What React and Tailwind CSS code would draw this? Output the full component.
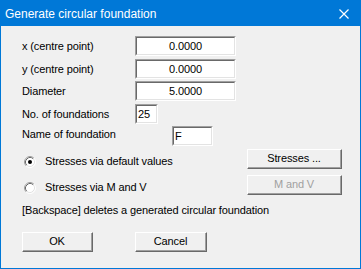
import React from "react";

const font = { fontFamily: '"Liberation Sans", Arial, sans-serif' };

function Sunken({ w, children, align = "center" }) {
  return (
    <div
      className={`h-[20px] border-t border-l border-[#a0a0a0] border-b-white border-r-white border-b border-r ${w}`}
    >
      <div
        className={`h-full w-full border-t border-l border-t-[#696969] border-l-[#696969] border-b border-r border-b-[#e3e3e3] border-r-[#e3e3e3] bg-white flex items-center text-[11px] text-black leading-none ${
          align === "center" ? "justify-center" : "justify-start pl-[1px]"
        }`}
      >
        {children}
      </div>
    </div>
  );
}

function Button({ w, children, disabled }) {
  return (
    <div
      className={`h-[20px] border-t border-l border-t-white border-l-white border-b border-r border-b-[#696969] border-r-[#696969] ${w}`}
    >
      <div
        className={`h-full w-full border-b border-r border-b-[#a0a0a0] border-r-[#a0a0a0] bg-[#f0f0f0] flex items-center justify-center text-[11px] leading-none ${
          disabled ? "text-[#a0a0a0]" : "text-black"
        }`}
      >
        {children}
      </div>
    </div>
  );
}

function Radio({ checked }) {
  return (
    <svg width="12" height="12" viewBox="0 0 12 12" className="shrink-0">
      <circle cx="6" cy="6" r="5" fill="#ffffff" />
      <path d="M2.11 9.89 A5.5 5.5 0 0 1 9.89 2.11" fill="none" stroke="#a0a0a0" strokeWidth="1" />
      <path d="M9.89 2.11 A5.5 5.5 0 0 1 2.11 9.89" fill="none" stroke="#ffffff" strokeWidth="1" />
      <path d="M2.82 9.18 A4.5 4.5 0 0 1 9.18 2.82" fill="none" stroke="#696969" strokeWidth="1" />
      <path d="M9.18 2.82 A4.5 4.5 0 0 1 2.82 9.18" fill="none" stroke="#e3e3e3" strokeWidth="1" />
      {checked && <circle cx="6" cy="6" r="2" fill="#000000" />}
    </svg>
  );
}

export default function App() {
  return (
    <div
      className="w-[361px] h-[269px] border border-[#0078d7] flex flex-col bg-[#f0f0f0]"
      style={font}
    >
      <div className="h-[25px] bg-[#0078d7] flex items-center justify-between pl-[4px] pr-[11px] shrink-0">
        <span className="text-white text-[12px] leading-none">
          Generate circular foundation
        </span>
        <svg width="10" height="10" viewBox="0 0 10 10">
          <path d="M0.5 0.5 L9.5 9.5 M9.5 0.5 L0.5 9.5" stroke="#ffffff" strokeWidth="1.2" />
        </svg>
      </div>

      <div className="flex-1 flex flex-col pl-[21px] pr-[18px] text-[11px] tracking-[-0.12px] text-black">
        <div className="mt-[10px] flex items-center h-[20px]">
          <span className="w-[113px]">x (centre point)</span>
          <Sunken w="w-[101px]">0.0000</Sunken>
        </div>
        <div className="mt-[3px] flex items-center h-[20px]">
          <span className="w-[113px]">y (centre point)</span>
          <Sunken w="w-[101px]">0.0000</Sunken>
        </div>
        <div className="mt-[2px] flex items-center h-[20px]">
          <span className="w-[113px]">Diameter</span>
          <Sunken w="w-[101px]">5.0000</Sunken>
        </div>
        <div className="mt-[3px] flex items-center h-[20px]">
          <span className="w-[113px]">No. of foundations</span>
          <Sunken w="w-[23px]" align="left">25</Sunken>
        </div>
        <div className="mt-[2px] flex items-center h-[20px]">
          <span className="w-[150px] -mt-[4px]">Name of foundation</span>
          <Sunken w="w-[41px]" align="left">F</Sunken>
        </div>
        <div className="mt-[3px] flex items-center justify-between h-[20px]">
          <div className="flex items-center gap-[9px] pl-[2px] mt-[5px]">
            <Radio checked />
            <span>Stresses via default values</span>
          </div>
          <Button w="w-[95px]">Stresses ...</Button>
        </div>
        <div className="mt-[6px] flex items-center justify-between h-[20px]">
          <div className="flex items-center gap-[9px] pl-[2px] mt-[5px]">
            <Radio />
            <span>Stresses via M and V</span>
          </div>
          <Button w="w-[95px]" disabled>
            M and V
          </Button>
        </div>
        <div className="mt-[8px] h-[14px] flex items-center">
          [Backspace] deletes a generated circular foundation
        </div>
        <div className="mt-[15px] flex items-center gap-[42px]">
          <Button w="w-[71px]">OK</Button>
          <Button w="w-[72px]">Cancel</Button>
        </div>
      </div>
    </div>
  );
}
